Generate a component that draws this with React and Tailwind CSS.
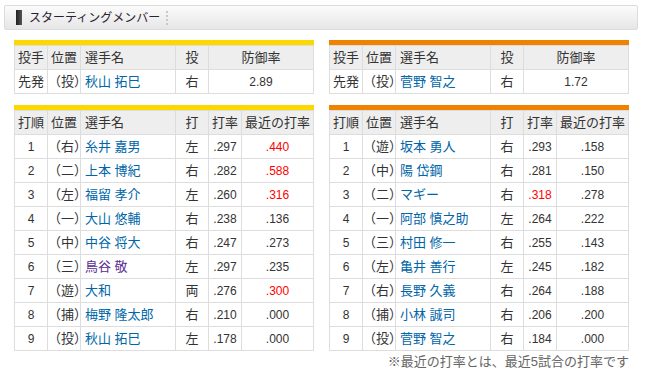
import React from 'react';

const pitchers = {
  left: { role: '先発', pos: '（投）', name: '秋山 拓巳', hand: '右', era: '2.89' },
  right: { role: '先発', pos: '（投）', name: '菅野 智之', hand: '右', era: '1.72' },
};

const lineups = {
  left: [
    ['1', '（右）', '糸井 嘉男', '左', '.297', '.440', false, true],
    ['2', '（二）', '上本 博紀', '右', '.282', '.588', false, true],
    ['3', '（左）', '福留 孝介', '左', '.260', '.316', false, true],
    ['4', '（一）', '大山 悠輔', '右', '.238', '.136'],
    ['5', '（中）', '中谷 将大', '右', '.247', '.273'],
    ['6', '（三）', '鳥谷 敬', '左', '.297', '.235', false, false, true],
    ['7', '（遊）', '大和', '両', '.276', '.300', false, true],
    ['8', '（捕）', '梅野 隆太郎', '右', '.210', '.000'],
    ['9', '（投）', '秋山 拓巳', '左', '.178', '.000'],
  ],
  right: [
    ['1', '（遊）', '坂本 勇人', '右', '.293', '.158'],
    ['2', '（中）', '陽 岱鋼', '右', '.281', '.150'],
    ['3', '（二）', 'マギー', '右', '.318', '.278', true],
    ['4', '（一）', '阿部 慎之助', '左', '.264', '.222'],
    ['5', '（三）', '村田 修一', '右', '.255', '.143'],
    ['6', '（左）', '亀井 善行', '左', '.245', '.182'],
    ['7', '（右）', '長野 久義', '右', '.264', '.188'],
    ['8', '（捕）', '小林 誠司', '右', '.206', '.200'],
    ['9', '（投）', '菅野 智之', '右', '.184', '.000'],
  ],
};

const th = 'h-[24px] p-0 border border-[#dddddd] bg-[#eeeeee] font-normal';
const td = 'h-[24px] p-0 border border-[#dddddd]';

function PitcherTable({ p, bar }) {
  return (
    <div className="w-[300px]">
      <div className={`h-[5px] ${bar}`} />
      <table className="w-[300px] border-collapse table-fixed text-[13px] text-[#333]">
        <colgroup>
          <col className="w-[33px]" />
          <col className="w-[33px]" />
          <col className="w-[95px]" />
          <col className="w-[33px]" />
          <col />
        </colgroup>
        <thead>
          <tr>
            <th className={`${th} text-center`}>投手</th>
            <th className={`${th} text-center`}>位置</th>
            <th className={`${th} text-left pl-[4px]`}>選手名</th>
            <th className={`${th} text-center`}>投</th>
            <th className={`${th} text-center`}>防御率</th>
          </tr>
        </thead>
        <tbody>
          <tr>
            <td className={`${td} text-center`}>{p.role}</td>
            <td className={`${td} text-center whitespace-nowrap`}>{p.pos}</td>
            <td className={`${td} pl-[4px] text-[#0066a8]`}>{p.name}</td>
            <td className={`${td} text-center`}>{p.hand}</td>
            <td className={`${td} text-center text-[12px]`}>{p.era}</td>
          </tr>
        </tbody>
      </table>
    </div>
  );
}

function LineupTable({ rows, bar }) {
  return (
    <div className="w-[300px]">
      <div className={`h-[5px] ${bar}`} />
      <table className="w-[300px] border-collapse table-fixed text-[13px] text-[#333]">
        <colgroup>
          <col className="w-[33px]" />
          <col className="w-[33px]" />
          <col className="w-[95px]" />
          <col className="w-[33px]" />
          <col className="w-[33px]" />
          <col />
        </colgroup>
        <thead>
          <tr>
            <th className={`${th} text-center`}>打順</th>
            <th className={`${th} text-center`}>位置</th>
            <th className={`${th} text-left pl-[4px]`}>選手名</th>
            <th className={`${th} text-center`}>打</th>
            <th className={`${th} text-center`}>打率</th>
            <th className={`${th} text-center`}>最近の打率</th>
          </tr>
        </thead>
        <tbody>
          {rows.map(r => (
            <tr key={r[0]}>
              <td className={`${td} text-center text-[12px]`}>{r[0]}</td>
              <td className={`${td} text-center whitespace-nowrap`}>{r[1]}</td>
              <td className={`${td} pl-[4px] ${r[8] ? 'text-[#5a2b91]' : 'text-[#0066a8]'}`}>{r[2]}</td>
              <td className={`${td} text-center`}>{r[3]}</td>
              <td className={`${td} text-center text-[12px] ${r[6] ? 'text-[#ff0000]' : ''}`}>{r[4]}</td>
              <td className={`${td} text-center text-[12px] ${r[7] ? 'text-[#ff0000]' : ''}`}>{r[5]}</td>
            </tr>
          ))}
        </tbody>
      </table>
    </div>
  );
}

export default function App() {
  return (
    <div className="w-[646px] h-[385px] bg-white pt-[5px] pl-[4px] font-['Liberation_Sans','Noto_Sans_CJK_JP',sans-serif]">
      <div className="w-[634px] h-[25px] border border-[#dcdcdc] rounded-[2px] bg-gradient-to-b from-[#fbfbfb] to-[#e6e6e6] flex items-center">
        <div className="ml-[11px] w-[6px] h-[15px] bg-gradient-to-r from-[#222] to-[#555]" />
        <div className="ml-[7px] text-[12px] text-[#2a2030] leading-none">スターティングメンバー</div>
        <div className="ml-[6px] h-[14px] border-l-2 border-dotted border-[#c8c8c8]" />
      </div>

      <div className="flex gap-[15px] pl-[10px] mt-[10px]">
        <div className="flex flex-col gap-[11px]">
          <PitcherTable p={pitchers.left} bar="bg-[#fcd700]" />
          <LineupTable rows={lineups.left} bar="bg-[#fcd700]" />
        </div>
        <div className="flex flex-col gap-[11px]">
          <PitcherTable p={pitchers.right} bar="bg-[#ef8300]" />
          <LineupTable rows={lineups.right} bar="bg-[#ef8300]" />
          <div className="-mt-[7px] text-right text-[13px] text-[#666] leading-none">※最近の打率とは、最近5試合の打率です</div>
        </div>
      </div>
    </div>
  );
}
